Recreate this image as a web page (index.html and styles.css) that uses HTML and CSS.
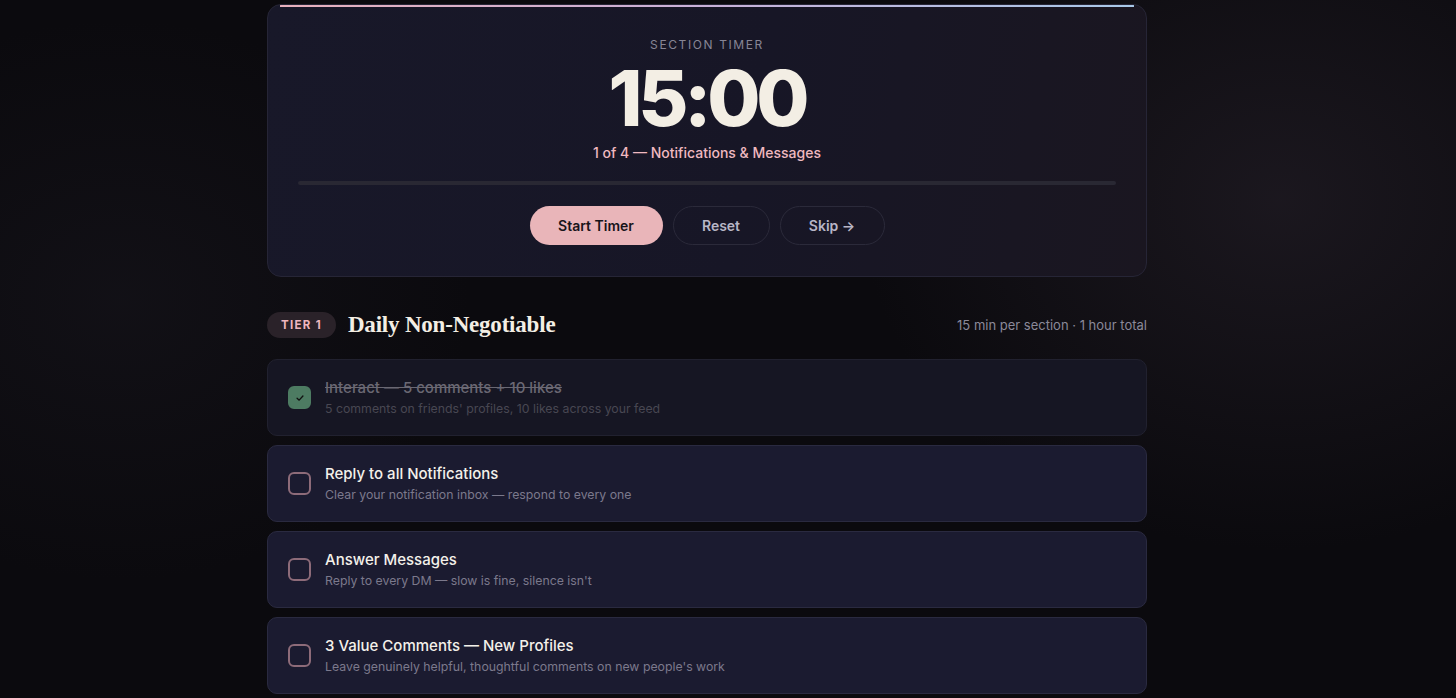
FILE: index.html
```html
<!DOCTYPE html>
<html lang="en">
<head>
<meta charset="utf-8">
<title>Section Timer</title>
<link rel="stylesheet" href="styles.css">
</head>
<body>
<main class="wrap">
  <section class="timer-card">
    <div class="timer-label">SECTION TIMER</div>
    <div class="timer-time">15:00</div>
    <div class="timer-sub">1 of 4 — Notifications &amp; Messages</div>
    <div class="progress"><div class="progress-fill"></div></div>
    <div class="buttons">
      <button class="btn btn-primary">Start Timer</button>
      <button class="btn btn-ghost btn-reset">Reset</button>
      <button class="btn btn-ghost btn-skip">Skip →</button>
    </div>
  </section>

  <header class="tier-head">
    <div class="tier-left">
      <span class="tier-badge">TIER 1</span>
      <h2 class="tier-title">Daily Non-Negotiable</h2>
    </div>
    <div class="tier-meta">15 min per section · 1 hour total</div>
  </header>

  <ul class="tasks">
    <li class="task done">
      <span class="check checked">
        <svg viewBox="0 0 12 12" width="10" height="10"><path d="M2.5 6.3 L5 8.6 L9.5 3.6" fill="none" stroke="#111" stroke-width="1.6" stroke-linecap="round" stroke-linejoin="round"/></svg>
      </span>
      <div class="task-text">
        <div class="task-title">Interact — 5 comments + 10 likes</div>
        <div class="task-sub">5 comments on friends' profiles, 10 likes across your feed</div>
      </div>
    </li>
    <li class="task">
      <span class="check"></span>
      <div class="task-text">
        <div class="task-title">Reply to all Notifications</div>
        <div class="task-sub">Clear your notification inbox — respond to every one</div>
      </div>
    </li>
    <li class="task">
      <span class="check"></span>
      <div class="task-text">
        <div class="task-title">Answer Messages</div>
        <div class="task-sub">Reply to every DM — slow is fine, silence isn't</div>
      </div>
    </li>
    <li class="task">
      <span class="check"></span>
      <div class="task-text">
        <div class="task-title">3 Value Comments — New Profiles</div>
        <div class="task-sub">Leave genuinely helpful, thoughtful comments on new people's work</div>
      </div>
    </li>
  </ul>
</main>
</body>
</html>
```

FILE: styles.css
```css
* { box-sizing: border-box; }
html, body { margin: 0; padding: 0; }
body {
  background-color: #0b0a0e;
  background-image:
    radial-gradient(ellipse 600px 500px at 1280px 200px, rgba(40, 34, 44, 0.55), transparent 70%),
    radial-gradient(ellipse 500px 400px at 120px 300px, rgba(26, 24, 32, 0.45), transparent 70%);
  font-family: Inter, "Noto Sans", sans-serif;
  color: #f2eee6;
  height: 698px;
  overflow: hidden;
  display: flex;
  justify-content: center;
  padding-right: 42px;
}
.wrap {
  width: 880px;
  margin-top: 4px;
  display: flex;
  flex-direction: column;
}
.timer-card {
  position: relative;
  background: linear-gradient(100deg, #181829 0%, #171626 55%, #1a1620 100%);
  border: 1px solid #262536;
  border-radius: 14px;
  padding: 32px 30px 31px;
  display: flex;
  flex-direction: column;
  align-items: center;
  overflow: hidden;
}
.timer-card::before {
  content: "";
  position: absolute;
  left: 12px; right: 12px; top: 0;
  height: 2px;
  background: linear-gradient(90deg, #e8b0bc, #c8b0d8 50%, #a8c8e8);
}
.timer-label {
  font-size: 12px;
  letter-spacing: 1.6px;
  color: #878595;
  line-height: 16px;
}
.timer-time {
  font-size: 77px;
  font-weight: 800;
  letter-spacing: -4.2px;
  line-height: 80px;
  margin-top: 5px;
  color: #f3eee4;
}
.timer-sub {
  font-size: 14px;
  font-weight: 500;
  color: #f0b9c0;
  line-height: 18px;
  margin-top: 6px;
}
.progress {
  align-self: stretch;
  height: 4px;
  background: #292833;
  border-radius: 2px;
  margin-top: 19px;
}
.progress-fill { width: 0; height: 100%; }
.buttons {
  display: flex;
  gap: 10px;
  margin-top: 21px;
}
.btn {
  height: 39px;
  border-radius: 20px;
  font-family: Inter, "Noto Sans", sans-serif;
  font-size: 14px;
  font-weight: 600;
  cursor: pointer;
}
.btn-primary {
  width: 133px;
  background: #e9b5b9;
  color: #17141a;
  border: none;
}
.btn-ghost {
  background: transparent;
  border: 1px solid #2b2a3a;
  color: #b8b6c6;
}
.btn-reset { width: 97px; }
.btn-skip { width: 105px; }

.tier-head {
  display: flex;
  justify-content: space-between;
  align-items: center;
  margin-top: 34px;
  height: 28px;
}
.tier-left {
  display: flex;
  align-items: center;
  gap: 12px;
}
.tier-badge {
  display: inline-flex;
  align-items: center;
  height: 26px;
  padding: 0 14px;
  border-radius: 13px;
  background: #2a2229;
  color: #efb6be;
  font-size: 11.5px;
  font-weight: 700;
  letter-spacing: 1.3px;
}
.tier-title {
  margin: 0;
  font-family: "Liberation Serif", "DejaVu Serif", serif;
  font-size: 23px;
  font-weight: 700;
  letter-spacing: -0.2px;
  color: #f3eee4;
}
.tier-meta {
  font-size: 13px;
  color: #8b8999;
}

.tasks {
  list-style: none;
  margin: 20px 0 0;
  padding: 0;
  display: flex;
  flex-direction: column;
  gap: 9px;
}
.task {
  height: 77px;
  display: flex;
  align-items: center;
  gap: 14px;
  padding: 0 20px;
  background: #1b1b30;
  border: 1px solid #2a2a40;
  border-radius: 10px;
}
.task.done {
  background: #161623;
  border-color: #21212f;
}
.check {
  width: 23px;
  height: 23px;
  flex: none;
  border: 2px solid #8d6b79;
  border-radius: 6px;
  display: flex;
  align-items: center;
  justify-content: center;
}
.check.checked {
  background: #4d7b62;
  border-color: #4d7b62;
}
.task-text {
  display: flex;
  flex-direction: column;
  gap: 3px;
  margin-top: -1px;
}
.task-title {
  font-size: 15px;
  font-weight: 500;
  color: #f4f1ea;
  line-height: 19px;
}
.task-sub {
  font-size: 12.3px;
  color: #7b798c;
  line-height: 17px;
}
.task.done .task-title {
  color: #6a6873;
  text-decoration: line-through;
}
.task.done .task-sub {
  color: #484752;
}
```
